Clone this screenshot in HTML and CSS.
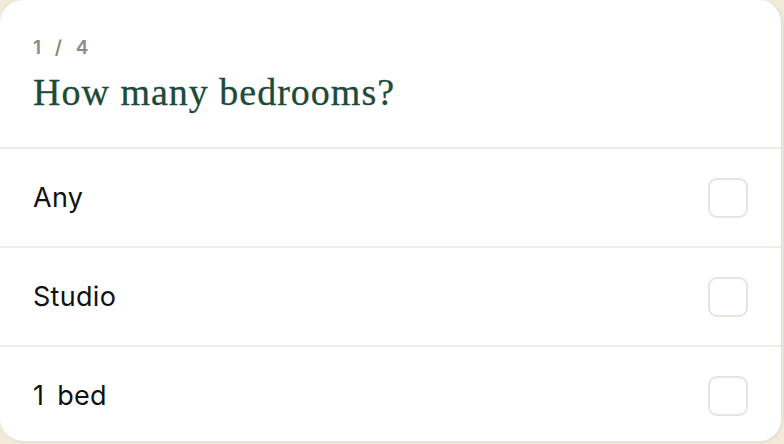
FILE: index.html
```html
<!DOCTYPE html>
<html lang="en">
<head>
<meta charset="utf-8">
<title>How many bedrooms?</title>
<link rel="stylesheet" href="styles.css">
</head>
<body>
<div class="card">
  <header class="head">
    <div class="step">1 / 4</div>
    <h1 class="title">How many bedrooms?</h1>
  </header>
  <ul class="options">
    <li class="option"><span class="label">Any</span><span class="box"></span></li>
    <li class="option"><span class="label">Studio</span><span class="box"></span></li>
    <li class="option"><span class="label">1 bed</span><span class="box"></span></li>
  </ul>
</div>
</body>
</html>
```
FILE: styles.css
```css
html, body {
  margin: 0;
  padding: 0;
  background: #f1ead9;
  width: 784px;
  height: 444px;
  overflow: hidden;
}
.card {
  box-sizing: border-box;
  width: 784px;
  height: 443px;
  background: #fff;
  border-radius: 24px;
  border-right: 3px solid #e6e2da;
  border-bottom: 2px solid #e6e2da;
  overflow: hidden;
  font-family: "Inter", "Liberation Sans", sans-serif;
}
.head {
  padding: 36px 33px 0;
  height: 149px;
  box-sizing: border-box;
  border-bottom: 2px solid #efede9;
}
.step {
  font-size: 19px;
  font-weight: 600;
  color: #8c8a82;
  line-height: 24px;
  word-spacing: 9px;
}
.title {
  margin: 12px 0 0;
  font-family: "Liberation Serif", serif;
  font-weight: normal;
  font-size: 38px;
  line-height: 40px;
  color: #1d4a3a;
  letter-spacing: 1px;
  -webkit-text-stroke: 0.3px #1d4a3a;
}
.options {
  list-style: none;
  margin: 0;
  padding: 0;
}
.option {
  display: flex;
  align-items: center;
  justify-content: space-between;
  height: 97px;
  padding: 0 33px 0 33px;
  border-bottom: 2px solid #efede9;
}
.option:last-child { border-bottom: none; }
.label {
  font-size: 27px;
  color: #111;
  letter-spacing: 0.3px;
  word-spacing: 5px;
}
.box {
  width: 36px;
  height: 36px;
  border: 2px solid #e8e5df;
  border-radius: 9px;
}
```
